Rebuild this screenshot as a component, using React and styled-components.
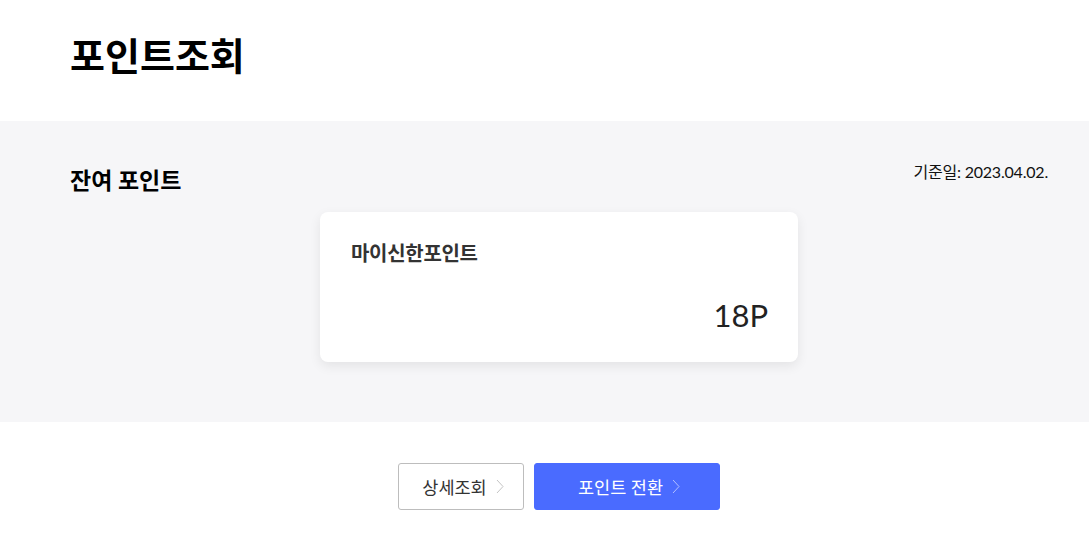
import styled, { createGlobalStyle } from "styled-components";

const GlobalStyle = createGlobalStyle`
  html, body {
    margin: 0;
    padding: 0;
    background: #fff;
    font-family: Lato, "Noto Sans CJK KR", sans-serif;
    color: #000;
  }
`;

const Page = styled.div`
  width: 1089px;
`;

const Inner = styled.div`
  width: 978px;
  margin-left: 70px;
  box-sizing: border-box;
`;

const TitleBar = styled.header`
  height: 121px;
  display: flex;
  align-items: center;
`;

const PageTitle = styled.h1`
  margin: 0;
  margin-top: -15px;
  font-size: 38px;
  font-weight: 700;
  letter-spacing: 0;
`;

const Summary = styled.section`
  background: #f6f6f8;
  height: 301px;
  box-sizing: border-box;
  padding-top: 160px;
`;

const SummaryHead = styled.div`
  display: flex;
  justify-content: space-between;
  align-items: flex-start;
  margin-top: -122px;
`;

const SectionTitle = styled.h2`
  margin: 0;
  margin-top: 3px;
  font-size: 23px;
  font-weight: 700;
`;

const BaseDate = styled.span`
  font-size: 16px;
  color: #111;
  letter-spacing: -0.2px;
`;

const Card = styled.div`
  width: 478px;
  height: 150px;
  margin: 16px auto 0;
  background: #fff;
  border-radius: 8px;
  box-shadow: 0 4px 12px rgba(0, 0, 0, 0.08);
  box-sizing: border-box;
  padding: 26px 30px 0 31px;
  display: flex;
  flex-direction: column;
`;

const CardTitle = styled.div`
  font-size: 20px;
  font-weight: 700;
  color: #333;
  letter-spacing: -0.3px;
`;

const Amount = styled.div`
  margin-top: 29px;
  text-align: right;
  font-size: 31px;
  color: #222;
`;

const Actions = styled.div`
  display: flex;
  justify-content: center;
  gap: 10px;
  padding-top: 41px;
`;

const Button = styled.button`
  height: 47px;
  width: ${({ $width }) => $width}px;
  display: inline-flex;
  align-items: center;
  justify-content: center;
  gap: 9px;
  border-radius: 3px;
  font-family: inherit;
  font-size: 17.5px;
  cursor: pointer;
  border: 1px solid ${({ $primary }) => ($primary ? "#4a6bff" : "#bdbdbd")};
  background: ${({ $primary }) => ($primary ? "#4a6bff" : "#fff")};
  color: ${({ $primary }) => ($primary ? "#fff" : "#333")};
  padding: 0 0 0 4px;
`;

const Chevron = ({ color }) => (
  <svg width="8" height="15" viewBox="0 0 8 15" fill="none">
    <path d="M1 1l6 6.5L1 14" stroke={color} strokeWidth="1" />
  </svg>
);

export default function App() {
  return (
    <Page>
      <GlobalStyle />
      <TitleBar>
        <Inner>
          <PageTitle>포인트조회</PageTitle>
        </Inner>
      </TitleBar>
      <Summary>
        <Inner>
          <SummaryHead>
            <SectionTitle>잔여 포인트</SectionTitle>
            <BaseDate>기준일: 2023.04.02.</BaseDate>
          </SummaryHead>
          <Card>
            <CardTitle>마이신한포인트</CardTitle>
            <Amount>18P</Amount>
          </Card>
        </Inner>
      </Summary>
      <Inner>
        <Actions>
          <Button $width={126}>
            상세조회 <Chevron color="#c4c4c4" />
          </Button>
          <Button $width={186} $primary>
            포인트 전환 <Chevron color="#b3c0ff" />
          </Button>
        </Actions>
      </Inner>
    </Page>
  );
}
